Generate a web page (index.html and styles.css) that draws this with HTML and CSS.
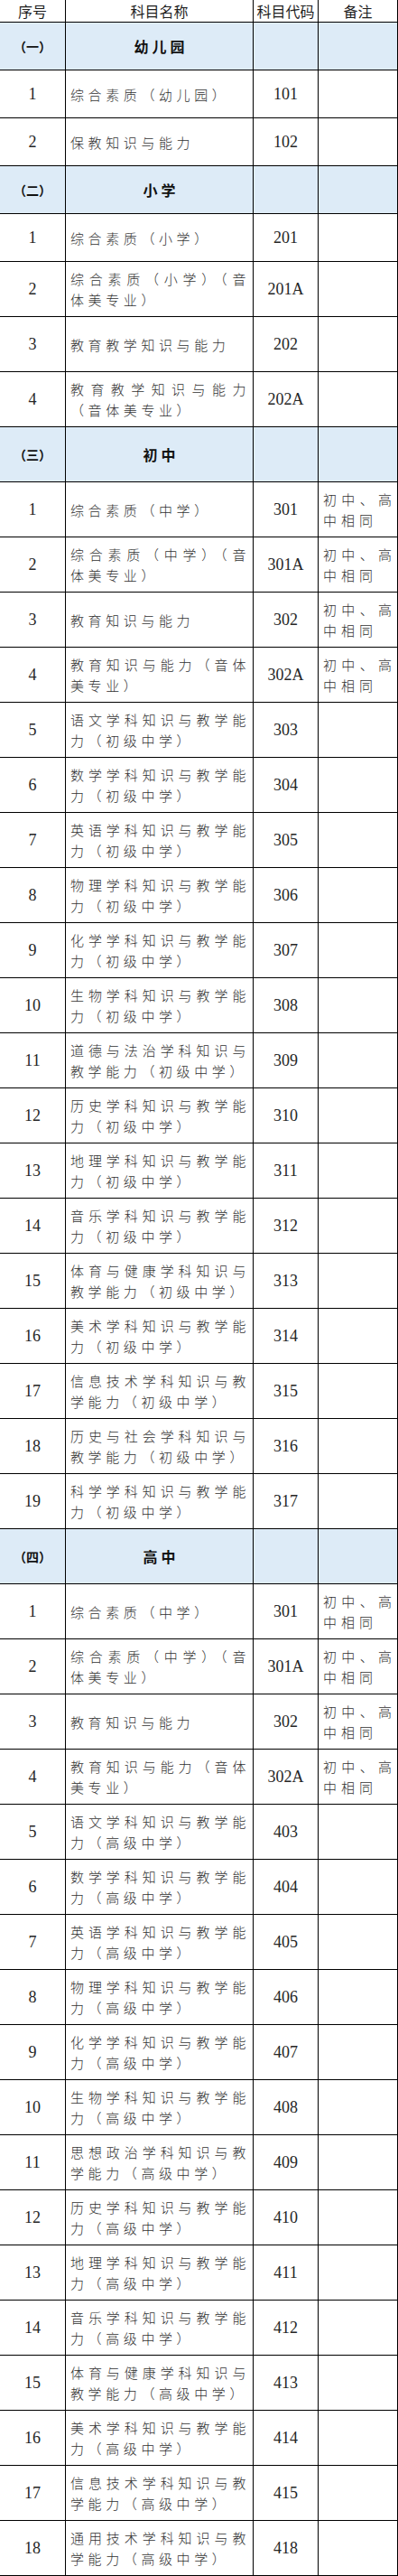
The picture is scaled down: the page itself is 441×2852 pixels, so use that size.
FILE: index.html
```html
<!DOCTYPE html>
<html lang="zh-CN">
<head>
<meta charset="utf-8">
<title>科目代码表</title>
<link rel="stylesheet" href="styles.css">
</head>
<body>
<div class="sheet">
  <div class="row hd"><div class="cell">序号</div><div class="cell">科目名称</div><div class="cell">科目代码</div><div class="cell">备注</div></div>

  <div class="row sec"><div class="cell no">（一）</div><div class="cell title">幼儿园</div><div class="cell"></div><div class="cell"></div></div>
  <div class="row"><div class="cell num">1</div><div class="cell name"><p>综合素质（幼儿园）</p></div><div class="cell num">101</div><div class="cell note"></div></div>
  <div class="row"><div class="cell num">2</div><div class="cell name"><p>保教知识与能力</p></div><div class="cell num">102</div><div class="cell note"></div></div>

  <div class="row sec"><div class="cell no">（二）</div><div class="cell title">小学</div><div class="cell"></div><div class="cell"></div></div>
  <div class="row"><div class="cell num">1</div><div class="cell name"><p>综合素质（小学）</p></div><div class="cell num">201</div><div class="cell note"></div></div>
  <div class="row"><div class="cell num">2</div><div class="cell name"><p>综合素质（小学）（音体美专业）</p></div><div class="cell num">201A</div><div class="cell note"></div></div>
  <div class="row"><div class="cell num">3</div><div class="cell name"><p>教育教学知识与能力</p></div><div class="cell num">202</div><div class="cell note"></div></div>
  <div class="row"><div class="cell num">4</div><div class="cell name"><p>教育教学知识与能力（音体美专业）</p></div><div class="cell num">202A</div><div class="cell note"></div></div>

  <div class="row sec"><div class="cell no">（三）</div><div class="cell title">初中</div><div class="cell"></div><div class="cell"></div></div>
  <div class="row"><div class="cell num">1</div><div class="cell name"><p>综合素质（中学）</p></div><div class="cell num">301</div><div class="cell note"><p>初中、高中相同</p></div></div>
  <div class="row"><div class="cell num">2</div><div class="cell name"><p>综合素质（中学）（音体美专业）</p></div><div class="cell num">301A</div><div class="cell note"><p>初中、高中相同</p></div></div>
  <div class="row"><div class="cell num">3</div><div class="cell name"><p>教育知识与能力</p></div><div class="cell num">302</div><div class="cell note"><p>初中、高中相同</p></div></div>
  <div class="row"><div class="cell num">4</div><div class="cell name"><p>教育知识与能力（音体美专业）</p></div><div class="cell num">302A</div><div class="cell note"><p>初中、高中相同</p></div></div>
  <div class="row"><div class="cell num">5</div><div class="cell name"><p>语文学科知识与教学能力（初级中学）</p></div><div class="cell num">303</div><div class="cell note"></div></div>
  <div class="row"><div class="cell num">6</div><div class="cell name"><p>数学学科知识与教学能力（初级中学）</p></div><div class="cell num">304</div><div class="cell note"></div></div>
  <div class="row"><div class="cell num">7</div><div class="cell name"><p>英语学科知识与教学能力（初级中学）</p></div><div class="cell num">305</div><div class="cell note"></div></div>
  <div class="row"><div class="cell num">8</div><div class="cell name"><p>物理学科知识与教学能力（初级中学）</p></div><div class="cell num">306</div><div class="cell note"></div></div>
  <div class="row"><div class="cell num">9</div><div class="cell name"><p>化学学科知识与教学能力（初级中学）</p></div><div class="cell num">307</div><div class="cell note"></div></div>
  <div class="row"><div class="cell num">10</div><div class="cell name"><p>生物学科知识与教学能力（初级中学）</p></div><div class="cell num">308</div><div class="cell note"></div></div>
  <div class="row"><div class="cell num">11</div><div class="cell name"><p>道德与法治学科知识与教学能力（初级中学）</p></div><div class="cell num">309</div><div class="cell note"></div></div>
  <div class="row"><div class="cell num">12</div><div class="cell name"><p>历史学科知识与教学能力（初级中学）</p></div><div class="cell num">310</div><div class="cell note"></div></div>
  <div class="row"><div class="cell num">13</div><div class="cell name"><p>地理学科知识与教学能力（初级中学）</p></div><div class="cell num">311</div><div class="cell note"></div></div>
  <div class="row"><div class="cell num">14</div><div class="cell name"><p>音乐学科知识与教学能力（初级中学）</p></div><div class="cell num">312</div><div class="cell note"></div></div>
  <div class="row"><div class="cell num">15</div><div class="cell name"><p>体育与健康学科知识与教学能力（初级中学）</p></div><div class="cell num">313</div><div class="cell note"></div></div>
  <div class="row"><div class="cell num">16</div><div class="cell name"><p>美术学科知识与教学能力（初级中学）</p></div><div class="cell num">314</div><div class="cell note"></div></div>
  <div class="row"><div class="cell num">17</div><div class="cell name"><p>信息技术学科知识与教学能力（初级中学）</p></div><div class="cell num">315</div><div class="cell note"></div></div>
  <div class="row"><div class="cell num">18</div><div class="cell name"><p>历史与社会学科知识与教学能力（初级中学）</p></div><div class="cell num">316</div><div class="cell note"></div></div>
  <div class="row"><div class="cell num">19</div><div class="cell name"><p>科学学科知识与教学能力（初级中学）</p></div><div class="cell num">317</div><div class="cell note"></div></div>

  <div class="row sec"><div class="cell no">（四）</div><div class="cell title">高中</div><div class="cell"></div><div class="cell"></div></div>
  <div class="row"><div class="cell num">1</div><div class="cell name"><p>综合素质（中学）</p></div><div class="cell num">301</div><div class="cell note"><p>初中、高中相同</p></div></div>
  <div class="row"><div class="cell num">2</div><div class="cell name"><p>综合素质（中学）（音体美专业）</p></div><div class="cell num">301A</div><div class="cell note"><p>初中、高中相同</p></div></div>
  <div class="row"><div class="cell num">3</div><div class="cell name"><p>教育知识与能力</p></div><div class="cell num">302</div><div class="cell note"><p>初中、高中相同</p></div></div>
  <div class="row"><div class="cell num">4</div><div class="cell name"><p>教育知识与能力（音体美专业）</p></div><div class="cell num">302A</div><div class="cell note"><p>初中、高中相同</p></div></div>
  <div class="row"><div class="cell num">5</div><div class="cell name"><p>语文学科知识与教学能力（高级中学）</p></div><div class="cell num">403</div><div class="cell note"></div></div>
  <div class="row"><div class="cell num">6</div><div class="cell name"><p>数学学科知识与教学能力（高级中学）</p></div><div class="cell num">404</div><div class="cell note"></div></div>
  <div class="row"><div class="cell num">7</div><div class="cell name"><p>英语学科知识与教学能力（高级中学）</p></div><div class="cell num">405</div><div class="cell note"></div></div>
  <div class="row"><div class="cell num">8</div><div class="cell name"><p>物理学科知识与教学能力（高级中学）</p></div><div class="cell num">406</div><div class="cell note"></div></div>
  <div class="row"><div class="cell num">9</div><div class="cell name"><p>化学学科知识与教学能力（高级中学）</p></div><div class="cell num">407</div><div class="cell note"></div></div>
  <div class="row"><div class="cell num">10</div><div class="cell name"><p>生物学科知识与教学能力（高级中学）</p></div><div class="cell num">408</div><div class="cell note"></div></div>
  <div class="row"><div class="cell num">11</div><div class="cell name"><p>思想政治学科知识与教学能力（高级中学）</p></div><div class="cell num">409</div><div class="cell note"></div></div>
  <div class="row"><div class="cell num">12</div><div class="cell name"><p>历史学科知识与教学能力（高级中学）</p></div><div class="cell num">410</div><div class="cell note"></div></div>
  <div class="row"><div class="cell num">13</div><div class="cell name"><p>地理学科知识与教学能力（高级中学）</p></div><div class="cell num">411</div><div class="cell note"></div></div>
  <div class="row"><div class="cell num">14</div><div class="cell name"><p>音乐学科知识与教学能力（高级中学）</p></div><div class="cell num">412</div><div class="cell note"></div></div>
  <div class="row"><div class="cell num">15</div><div class="cell name"><p>体育与健康学科知识与教学能力（高级中学）</p></div><div class="cell num">413</div><div class="cell note"></div></div>
  <div class="row"><div class="cell num">16</div><div class="cell name"><p>美术学科知识与教学能力（高级中学）</p></div><div class="cell num">414</div><div class="cell note"></div></div>
  <div class="row"><div class="cell num">17</div><div class="cell name"><p>信息技术学科知识与教学能力（高级中学）</p></div><div class="cell num">415</div><div class="cell note"></div></div>
  <div class="row"><div class="cell num">18</div><div class="cell name"><p>通用技术学科知识与教学能力（高级中学）</p></div><div class="cell num">418</div><div class="cell note"></div></div>
</div>
</body>
</html>
```
FILE: styles.css
```css
html, body {
  margin: 0;
  padding: 0;
  background: #ffffff;
}

.sheet {
  display: grid;
  grid-template-columns: 72px 207px 71px 87px;
  grid-template-rows: 24px repeat(5, 52px) repeat(42, 60px);
  gap: 1px;
  width: 441px;
  box-sizing: border-box;
  padding: 0 1px 1px 0;
  background: #000000;
}

.row {
  display: contents;
}

.cell {
  background: #ffffff;
  display: flex;
  align-items: center;
  justify-content: center;
  font-family: "Noto Sans CJK SC", sans-serif;
  color: #333333;
  overflow: hidden;
}

.cell p {
  margin: 0;
  flex: 1;
  text-align: justify;
}

.hd .cell {
  font-size: 16px;
  line-height: 24px;
  color: #1e1e1e;
  font-weight: 400;
}

.sec .cell {
  background: #ddebf7;
  color: #111111;
  font-weight: 700;
}

.sec .no {
  font-size: 14px;
}

.sec .title {
  font-size: 16px;
  letter-spacing: 4px;
  padding-left: 4px;
}

.num {
  font-family: "Liberation Serif", "Times New Roman", serif;
  font-size: 18px;
  color: #262626;
}

.name {
  justify-content: flex-start;
  padding: 0 3px 0 5px;
  font-size: 15px;
  font-weight: 300;
  letter-spacing: 4.6px;
  line-height: 23px;
  color: #333333;
}

.note {
  justify-content: flex-start;
  padding: 0 1px 0 5px;
  font-size: 15px;
  font-weight: 300;
  letter-spacing: 5px;
  line-height: 23px;
  color: #333333;
}
```
